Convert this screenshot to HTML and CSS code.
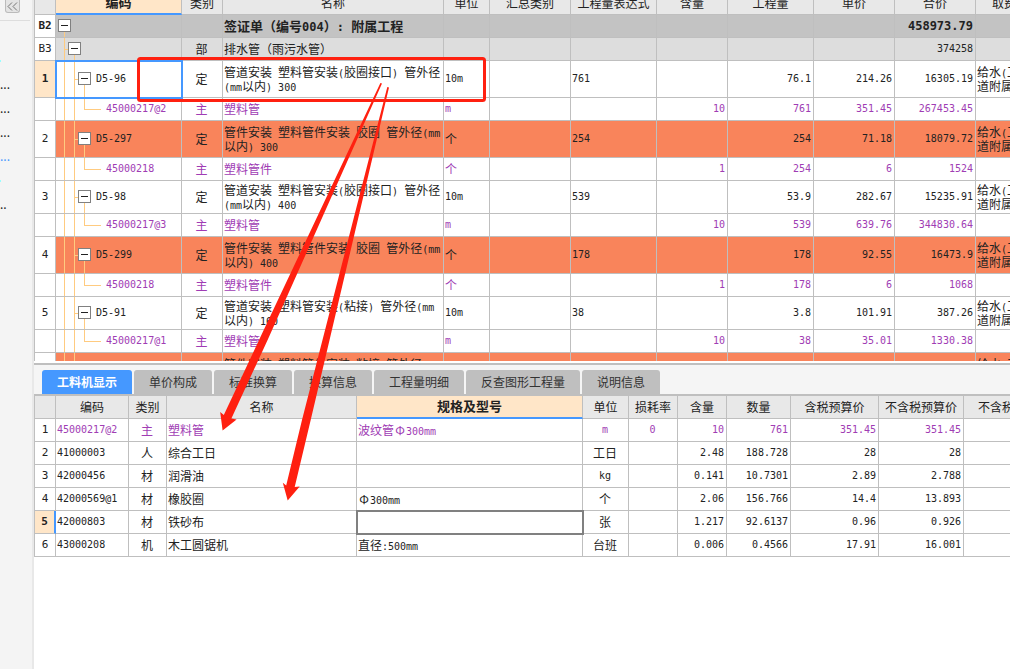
FILE: index.html
```html
<!DOCTYPE html>
<html lang="zh-CN">
<head>
<meta charset="utf-8">
<title>工程量清单</title>
<link rel="stylesheet" href="styles.css">
</head>
<body>
<div class="app">
  <aside class="side">
    <div class="side-head"><button class="fold" aria-label="折叠"><svg width="11" height="9" viewBox="0 0 11 9"><path d="M5 .5 1 4.5l4 4M10 .5l-4 4 4 4"/></svg></button></div>
    <ul class="side-list">
      <li class="tick"></li><li>...</li><li>...</li><li>...</li><li class="on">...</li><li class="tick"></li><li>..</li>
    </ul>
  </aside>
  <main class="main">
    <section class="pane-top">
      <div class="scroll">
      <table class="grid upper">
        <colgroup><col class="w21"><col class="w126"><col class="w41"><col class="w221"><col class="w46"><col class="w81"><col class="w86"><col class="w71"><col class="w86"><col class="w81"><col class="w81"><col></colgroup>
        <thead><tr><th></th><th class="cur">编码</th><th>类别</th><th>名称</th><th>单位</th><th>汇总类别</th><th>工程量表达式</th><th>含量</th><th>工程量</th><th>单价</th><th>合价</th><th>取费专业</th></tr></thead>
        <tbody>
        <tr class="g1"><td class="i">B2</td><td class="t0"><div class="tree"><button class="box" aria-label="收起"></button></div></td><td></td><td>签证单（编号<span class="en">004</span>）<span class="en">: </span>附属工程</td><td></td><td></td><td></td><td></td><td></td><td></td><td class="n">458973.79</td><td></td></tr>
        <tr class="g2"><td class="i">B3</td><td class="t1"><div class="tree"><button class="box" aria-label="收起"></button></div></td><td class="c">部</td><td>排水管（雨污水管）</td><td></td><td></td><td></td><td></td><td></td><td></td><td class="n">374258</td><td></td></tr>
        <tr class="tall"><td class="i sel">1</td><td class="t2 focus"><div class="tree"><button class="box" aria-label="收起"></button><span class="en">D5-96</span></div></td><td class="c">定</td><td>管道安装<span class="en"> </span>塑料管安装<span class="en">(</span>胶圈接口<span class="en">) </span>管外径<br><span class="en">(mm</span>以内<span class="en">) 300</span></td><td class="l">10m</td><td></td><td class="l">761</td><td></td><td class="n">76.1</td><td class="n">214.26</td><td class="n">16305.19</td><td>给水<span class="en">(</span>工程管<br>道附属</td></tr>
        <tr class="mat"><td class="i"></td><td class="t3"><div class="tree"><span class="en">45000217@2</span></div></td><td class="c">主</td><td>塑料管</td><td class="l">m</td><td></td><td></td><td class="n">10</td><td class="n">761</td><td class="n">351.45</td><td class="n">267453.45</td><td></td></tr>
        <tr class="tall hot"><td class="i">2</td><td class="t2"><div class="tree"><button class="box" aria-label="收起"></button><span class="en">D5-297</span></div></td><td class="c">定</td><td>管件安装<span class="en"> </span>塑料管件安装<span class="en"> </span>胶圈<span class="en"> </span>管外径<span class="en">(mm</span><br>以内<span class="en">) 300</span></td><td>个</td><td></td><td class="l">254</td><td></td><td class="n">254</td><td class="n">71.18</td><td class="n">18079.72</td><td>给水<span class="en">(</span>工程管<br>道附属</td></tr>
        <tr class="mat"><td class="i"></td><td class="t3"><div class="tree"><span class="en">45000218</span></div></td><td class="c">主</td><td>塑料管件</td><td>个</td><td></td><td></td><td class="n">1</td><td class="n">254</td><td class="n">6</td><td class="n">1524</td><td></td></tr>
        <tr class="mid"><td class="i">3</td><td class="t2"><div class="tree"><button class="box" aria-label="收起"></button><span class="en">D5-98</span></div></td><td class="c">定</td><td>管道安装<span class="en"> </span>塑料管安装<span class="en">(</span>胶圈接口<span class="en">) </span>管外径<br><span class="en">(mm</span>以内<span class="en">) 400</span></td><td class="l">10m</td><td></td><td class="l">539</td><td></td><td class="n">53.9</td><td class="n">282.67</td><td class="n">15235.91</td><td>给水<span class="en">(</span>工程管<br>道附属</td></tr>
        <tr class="mat"><td class="i"></td><td class="t3"><div class="tree"><span class="en">45000217@3</span></div></td><td class="c">主</td><td>塑料管</td><td class="l">m</td><td></td><td></td><td class="n">10</td><td class="n">539</td><td class="n">639.76</td><td class="n">344830.64</td><td></td></tr>
        <tr class="tall hot"><td class="i">4</td><td class="t2"><div class="tree"><button class="box" aria-label="收起"></button><span class="en">D5-299</span></div></td><td class="c">定</td><td>管件安装<span class="en"> </span>塑料管件安装<span class="en"> </span>胶圈<span class="en"> </span>管外径<span class="en">(mm</span><br>以内<span class="en">) 400</span></td><td>个</td><td></td><td class="l">178</td><td></td><td class="n">178</td><td class="n">92.55</td><td class="n">16473.9</td><td>给水<span class="en">(</span>工程管<br>道附属</td></tr>
        <tr class="mat"><td class="i"></td><td class="t3"><div class="tree"><span class="en">45000218</span></div></td><td class="c">主</td><td>塑料管件</td><td>个</td><td></td><td></td><td class="n">1</td><td class="n">178</td><td class="n">6</td><td class="n">1068</td><td></td></tr>
        <tr class="mid"><td class="i">5</td><td class="t2"><div class="tree"><button class="box" aria-label="收起"></button><span class="en">D5-91</span></div></td><td class="c">定</td><td>管道安装<span class="en"> </span>塑料管安装<span class="en">(</span>粘接<span class="en">) </span>管外径<span class="en">(mm</span><br>以内<span class="en">) 160</span></td><td class="l">10m</td><td></td><td class="l">38</td><td></td><td class="n">3.8</td><td class="n">101.91</td><td class="n">387.26</td><td>给水<span class="en">(</span>工程管<br>道附属</td></tr>
        <tr class="mat"><td class="i"></td><td class="t3"><div class="tree"><span class="en">45000217@1</span></div></td><td class="c">主</td><td>塑料管</td><td class="l">m</td><td></td><td></td><td class="n">10</td><td class="n">38</td><td class="n">35.01</td><td class="n">1330.38</td><td></td></tr>
        <tr class="tall hot"><td class="i"></td><td class="t4"></td><td></td><td>管件安装<span class="en"> </span>塑料管件安装<span class="en"> </span>粘接<span class="en"> </span>管外径<span class="en">(mm</span><br>以内<span class="en">)</span></td><td></td><td></td><td></td><td></td><td></td><td></td><td></td><td>给水<span class="en">(</span>工程管<br>道附属</td></tr>
        </tbody>
      </table>
      </div>
    </section>
    <nav class="tabs">
      <button class="tab active">工料机显示</button><button class="tab">单价构成</button><button class="tab">标准换算</button><button class="tab">换算信息</button><button class="tab">工程量明细</button><button class="tab">反查图形工程量</button><button class="tab">说明信息</button>
    </nav>
    <section class="pane-bottom">
      <table class="grid lower">
        <colgroup><col class="w21"><col class="w73"><col class="w38"><col class="w190"><col class="w226"><col class="w46"><col class="w49"><col class="w49"><col class="w64"><col class="w88"><col class="w85"><col></colgroup>
        <thead><tr><th></th><th>编码</th><th>类别</th><th>名称</th><th class="cur">规格及型号</th><th>单位</th><th>损耗率</th><th>含量</th><th>数量</th><th>含税预算价</th><th>不含税预算价</th><th>不含税市场价</th></tr></thead>
        <tbody>
        <tr class="mat"><td class="i">1</td><td class="l">45000217@2</td><td class="c">主</td><td>塑料管</td><td>波纹管<span class="phi">Φ</span><span class="en">300mm</span></td><td class="l c">m</td><td class="l c">0</td><td class="n">10</td><td class="n">761</td><td class="n">351.45</td><td class="n">351.45</td><td></td></tr>
        <tr><td class="i">2</td><td class="l">41000003</td><td class="c">人</td><td>综合工日</td><td></td><td class="c">工日</td><td></td><td class="n">2.48</td><td class="n">188.728</td><td class="n">28</td><td class="n">28</td><td></td></tr>
        <tr><td class="i">3</td><td class="l">42000456</td><td class="c">材</td><td>润滑油</td><td></td><td class="l c">kg</td><td></td><td class="n">0.141</td><td class="n">10.7301</td><td class="n">2.89</td><td class="n">2.788</td><td></td></tr>
        <tr><td class="i">4</td><td class="l">42000569@1</td><td class="c">材</td><td>橡胶圈</td><td><span class="phi">Φ</span><span class="en">300mm</span></td><td class="c">个</td><td></td><td class="n">2.06</td><td class="n">156.766</td><td class="n">14.4</td><td class="n">13.893</td><td></td></tr>
        <tr><td class="i sel mark">5</td><td class="l">42000803</td><td class="c">材</td><td>铁砂布</td><td class="edit"><input type="text" aria-label="规格及型号"></td><td class="c">张</td><td></td><td class="n">1.217</td><td class="n">92.6137</td><td class="n">0.96</td><td class="n">0.926</td><td></td></tr>
        <tr><td class="i">6</td><td class="l">43000208</td><td class="c">机</td><td>木工圆锯机</td><td>直径<span class="en">:500mm</span></td><td class="c">台班</td><td></td><td class="n">0.006</td><td class="n">0.4566</td><td class="n">17.91</td><td class="n">16.001</td><td></td></tr>
        </tbody>
      </table>
    </section>
  </main>
  <svg class="marks" width="500" height="520" viewBox="0 0 500 520" aria-hidden="true">
    <rect x="138.5" y="58.5" width="346" height="42" rx="2"/>
    <path d="M380.4 83 259 340 223.8 415l-3.6-3 2.4 18.6 14-11.2-5.2-1L267.6 340 382 83.5z"/>
    <path d="M387.3 87 302 420l-15.8 65.5-3.4-2.7 4.9 17.7 12-14-5 .6L310.7 420 389 87.5z"/>
  </svg>
</div>
</body>
</html>
```
FILE: styles.css
```css
* { box-sizing: border-box; }
body {
  margin: 0;
  overflow: hidden;
  background: #fff;
  color: #222;
  font: 12px/14px "Noto Sans CJK SC", sans-serif;
}
button { font: inherit; padding: 0; border: 0; }
.app { position: relative; display: flex; min-height: 100vh; }

/* left strip */
.side { flex: 0 0 34px; background: #f4f4f4; border-right: 2px solid #e8e8e8; overflow: hidden; }
.side-head { height: 21px; margin-right: 2px; padding-left: 5px; border-bottom: 1px solid #ddd; }
.fold {
  display: grid;
  place-items: center;
  width: 15px;
  height: 13px;
  background: #e4e4e4;
  border: 1px solid #bbb;
  border-top: 0;
  border-radius: 0 0 3px 3px;
}
.fold svg { fill: none; stroke: #777; }
.side-list { list-style: none; margin: 0; padding: 28px 0 0; }
.side-list li { height: 24px; line-height: 22px; }
.side-list .on { color: #4598ff; }
.side-list .tick { display: flex; align-items: center; }
.side-list .tick::before { content: ""; width: 1px; height: 2px; background: #9ff; }
.main { flex: 1; min-width: 0; overflow: hidden; }

/* grids */
.pane-top { padding-bottom: 2px; border-bottom: 2px solid #bfbfbf; }
.scroll { height: 361px; overflow: hidden; }
.grid {
  table-layout: fixed;
  border-collapse: separate;
  border-spacing: 0;
  border-left: 1px solid #bfbfbf;
}
.upper { width: max(100%, 1023px); margin-top: -8px; }
.lower { width: max(100%, 1031px); }
.w21 { width: 21px; } .w38 { width: 38px; } .w41 { width: 41px; } .w46 { width: 46px; }
.w49 { width: 49px; } .w64 { width: 64px; } .w71 { width: 71px; } .w73 { width: 73px; }
.w81 { width: 81px; } .w85 { width: 85px; } .w86 { width: 86px; } .w88 { width: 88px; }
.w126 { width: 126px; } .w190 { width: 190px; } .w221 { width: 221px; } .w226 { width: 226px; }
th, td {
  height: 23px;
  padding: 0 2px 1px;
  border-right: 1px solid #bfbfbf;
  border-bottom: 1px solid #bfbfbf;
  white-space: nowrap;
  overflow: hidden;
}
td { padding-left: 1px; }
th { background: #e8e8e8; font-weight: 400; text-align: center; }
th.cur { background: #ffe6c8; border-bottom: 2px solid #4598ff; font-size: 13px; font-weight: 700; }
td { text-align: left; }
.en, .n, .l, .i { font-family: "DejaVu Sans Mono", monospace; font-size: 10px; }
.en { white-space: pre; line-height: 8px; }
.phi { display: inline-block; width: 12px; text-align: center; line-height: 8px; }
.n { text-align: right; padding-right: 2px; }
.c, .i { text-align: center; }
.tall td { height: 37px; }
.mid td { height: 33px; }
.mat { color: #a03cb4; }
.mat .i { color: #222; }
.g1 td { background-color: #c3c3c3; font-size: 13px; font-weight: 700; }
.g1 td.n, .g1 .en { font-size: 12px; }
.g2 td { background-color: #ddd; }
.hot td { background-color: #f9845b; }
td.i, .g1 td.i, .g2 td.i, .hot td.i { background-color: #fff; padding: 0; font-size: 11px; }
td.i.sel { background-color: #ffe6c8; font-weight: 700; }
td.i.mark { border-right: 2px solid #4598ff; }

/* tree column */
.tree { display: flex; align-items: center; gap: 5px; padding-left: 1px; }
.box {
  display: grid;
  place-items: center;
  width: 13px;
  height: 13px;
  background: #fff;
  border: 1px solid #808080;
}
.box::before { content: ""; width: 7px; height: 1px; background: #222; }
.t0, .t1, .t2, .t3, .t4 { --g: linear-gradient(#ffcb80, #ffcb80); background-repeat: no-repeat; }
.t0 { background-image: var(--g); background-size: 1px 50%; background-position: 8px 100%; }
.t1 { padding-left: 11px; background-image: var(--g), var(--g), var(--g); background-size: 1px 100%, 4px 1px, 1px 50%; background-position: 8px 0, 8px 50%, 18px 100%; }
.t2 { padding-left: 21px; background-image: var(--g), var(--g), var(--g), var(--g); background-size: 1px 100%, 1px 100%, 4px 1px, 1px 50%; background-position: 8px 0, 18px 0, 18px 50%, 28px 100%; }
.t3 { padding-left: 49px; background-image: var(--g), var(--g), var(--g), var(--g); background-size: 1px 100%, 1px 100%, 1px 50%, 17px 1px; background-position: 8px 0, 18px 0, 28px 0, 28px 50%; }
.t4 { background-image: var(--g), var(--g); background-size: 1px 100%; background-position: 8px 0, 18px 0; }
.focus { position: relative; outline: 2px solid #4598ff; outline-offset: -1px; }

/* tabs */
.tabs { display: flex; gap: 2px; padding: 5px 8px 0; background: #f5f5f5; border-bottom: 2px solid #bfbfbf; }
.tab { height: 24px; padding: 0 15px; background: #bfbfbf; color: #333; border-radius: 3px 3px 0 0; white-space: nowrap; }
.tab.active { background: #4598ff; color: #fff; font-weight: 700; }

.edit { padding: 0; position: relative; outline: 2px solid #808080; outline-offset: -1px; }
.edit input { display: block; width: 100%; height: 20px; border: 0; padding: 0 2px; font: inherit; background: transparent; outline: 0; }

/* annotations drawn over the grids */
.marks { position: absolute; left: 0; top: 0; pointer-events: none; fill: #ff2010; }
.marks rect { fill: none; stroke: #ff2010; stroke-width: 3; }
```
